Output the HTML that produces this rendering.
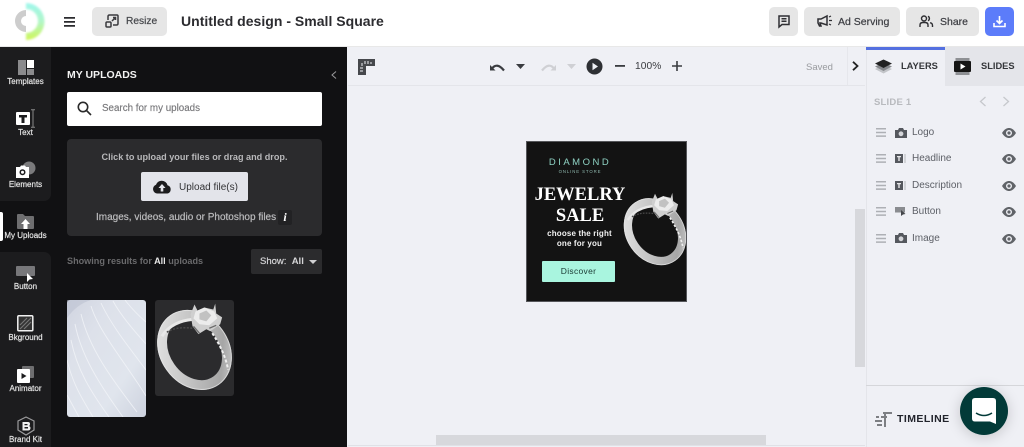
<!DOCTYPE html>
<html><head><meta charset="utf-8"><style>
html,body{margin:0;padding:0}
body{width:1024px;height:447px;position:relative;overflow:hidden;background:#fff;font-family:"Liberation Sans",sans-serif}
.a{position:absolute;white-space:nowrap}
.b{position:absolute;background:#e6e6e6;border-radius:5px}
.rl{position:absolute;left:0;width:51px;text-align:center;font-size:8px;color:#e4e4e4;line-height:10px;-webkit-text-stroke:.2px #e4e4e4}
.ly{position:absolute;left:912px;font-size:10px;color:#5c5f66;line-height:12px}
svg{position:absolute;overflow:visible}
</style></head><body>
<svg width="0" height="0" style="left:0;top:0"><defs>
<linearGradient id="rg" x1="0" y1="0" x2="1" y2="1"><stop offset="0" stop-color="#e6e6e6"/><stop offset=".45" stop-color="#c4c4c4"/><stop offset=".8" stop-color="#a6a6a6"/><stop offset="1" stop-color="#d4d4d4"/></linearGradient>
<linearGradient id="lg" x1="0" y1="0" x2="0" y2="1"><stop offset="0" stop-color="#8ff5ea"/><stop offset=".5" stop-color="#a5f5c0"/><stop offset="1" stop-color="#c8f53c"/></linearGradient>
<filter id="bl"><feGaussianBlur stdDeviation="1"/></filter>
<filter id="bs"><feGaussianBlur stdDeviation=".35"/></filter>
<symbol id="ring" viewBox="0 0 80 96"><g filter="url(#bs)">
<ellipse cx="40" cy="50" rx="30" ry="38" transform="rotate(-35 40 50)" fill="none" stroke="url(#rg)" stroke-width="10"/>
<ellipse cx="40" cy="50" rx="34.500" ry="42.500" transform="rotate(-35 40 50)" fill="none" stroke="#e8e8e8" stroke-width="1" opacity=".7"/>
<path d="M7 36C14 25 26 20 38 19" fill="none" stroke="#e8e8e8" stroke-width="3"/>
<path d="M12 32C20 27 30 27 38 28" fill="none" stroke="#4a4a4a" stroke-width="1.500" stroke-dasharray="2 1.500"/>
<path d="M58 33C66 45 72 58 74 70" fill="none" stroke="#f0f0f0" stroke-width="2" stroke-dasharray="3 2"/>
<path d="M40 4L43 10 50 7 59 9 61 3 62 13 68 17 66 24 56 31 52 29 44 34 38 26 36 14Z" fill="#cfcfcf"/>
<path d="M41 11L50 7 60 11 63 18 55 25 45 24 39 18Z" fill="#ececec"/>
<path d="M45 13L52 10 57 15 52 21 45 19Z" fill="#c2c2c2"/>
<path d="M39 26L45 33M55 28L62 25" stroke="#6a6a6a" stroke-width="1.300"/>
</g></symbol>
<symbol id="cam" viewBox="0 0 12 10"><path d="M0 2H3L4 0H8L9 2H12V10H0Z" fill="#55585e"/><circle cx="6" cy="5.800" r="2.400" fill="#d5d6da"/></symbol>
<symbol id="eye" viewBox="0 0 14 10"><path d="M0 5C2.500 1 5 0 7 0S11.500 1 14 5C11.500 9 9 10 7 10S2.500 9 0 5Z" fill="#606368"/><circle cx="7" cy="5" r="3" fill="#eff0f5"/><circle cx="7" cy="5" r="1.600" fill="#606368"/></symbol>
<symbol id="grip" viewBox="0 0 10 9"><path d="M0 0H10V1.500H0ZM0 3.700H10V5.200H0ZM0 7.400H10V8.900H0Z" fill="#aeb0b5"/></symbol>
<symbol id="tic" viewBox="0 0 12 9"><rect width="8" height="9" fill="#55585e"/><path d="M2 2H6V3.200H4.700V7H3.300V3.200H2Z" fill="#e8e8ea"/><path d="M10 0V9" stroke="#b5b7bb"/></symbol>
</defs></svg>

<!-- HEADER -->
<div class="a" style="left:0;top:46px;width:1024px;height:1px;background:#e8e8e8"></div>
<svg style="left:0;top:0" width="50" height="46">
<path d="M26 3A18.500 18.500 0 0 1 26 40V33A11.500 11.500 0 0 0 26 9Z" fill="url(#lg)" filter="url(#bl)" opacity=".85"/>
<path d="M26 10A11 11 0 0 0 26 32V26A5 5 0 0 1 26 16Z" fill="#cdcdcd"/>
</svg>
<svg style="left:64px;top:17px" width="12" height="10"><path d="M0 0H11V1.800H0ZM0 4H11V5.800H0ZM0 8H11V9.800H0Z" fill="#2b2b2f"/></svg>
<div class="b" style="left:92px;top:7px;width:75px;height:29px"></div>
<svg style="left:105px;top:14px" width="14" height="14" fill="none" stroke="#3a3a3e" stroke-width="1.500"><rect x="1" y="8" width="5" height="5" rx="1"/><path d="M3 6V2.500Q3 1 4.500 1H12Q13 1 13 2V9.500Q13 11 11.500 11H8M7 7L10.500 3.500M8 3.500H10.500V6"/></svg>
<div class="a" style="left:126px;top:15px;font-size:10.200px;color:#45474b;line-height:14px;-webkit-text-stroke:.2px #45474b">Resize</div>
<div class="a" style="left:181px;top:12px;font-size:14px;font-weight:bold;color:#2c2c30;line-height:19px;letter-spacing:.02px">Untitled design - Small Square</div>
<div class="b" style="left:769px;top:7px;width:29px;height:29px"></div>
<svg style="left:778px;top:15px" width="12" height="13" fill="none" stroke="#2f2f33" stroke-width="1.500"><path d="M1 1H11V9.500H4L1 12ZM3.500 3.800H8.500M3.500 6.300H8.500"/></svg>
<div class="b" style="left:804px;top:7px;width:96px;height:29px"></div>
<svg style="left:818px;top:16px" width="14" height="11"><path d="M0 3H3L9 0V9L3 7H2L3 10H1.500L0 7Z" fill="none" stroke="#2f2f33" stroke-width="1.500"/><path d="M11 1L13 0M11 4.500H14M11 8L13 9" stroke="#2f2f33" stroke-width="1.200"/></svg>
<div class="a" style="left:838px;top:14.500px;font-size:10.500px;color:#3c3d42;line-height:14px;-webkit-text-stroke:.2px #3c3d42">Ad Serving</div>
<div class="b" style="left:906px;top:7px;width:73px;height:29px"></div>
<svg style="left:919px;top:15px" width="14" height="13" fill="none" stroke="#2f2f33" stroke-width="1.400"><circle cx="5" cy="3.500" r="2.500"/><path d="M1 12V10Q1 7.500 4 7.500H6Q9 7.500 9 10V12M9 1.300A2.500 2.500 0 0 1 9 5.800M11 7.800Q13.500 8 13.500 10.500V12"/></svg>
<div class="a" style="left:940px;top:14.500px;font-size:10.500px;color:#3c3d42;line-height:14px;-webkit-text-stroke:.2px #3c3d42">Share</div>
<div class="b" style="left:985px;top:7px;width:29px;height:29px;background:#5c7cfa"></div>
<svg style="left:993px;top:16px" width="13" height="12" fill="none" stroke="#fff" stroke-width="1.600"><path d="M6.500 0V7M3.500 4.500L6.500 7.500 9.500 4.500M1 7V10.500H12V7"/></svg>

<!-- LEFT RAIL -->
<div class="a" style="left:0;top:47px;width:51px;height:400px;background:#111113"></div>
<div class="a" style="left:0;top:47px;width:51px;height:154px;background:#1c1c1e;border-radius:0 0 7px 0"></div>
<div class="a" style="left:0;top:252px;width:51px;height:195px;background:#1c1c1e;border-radius:0 7px 0 0"></div>
<svg style="left:18px;top:60px" width="16" height="15"><rect width="8" height="15" fill="#8a8a8c"/><rect x="9" width="7" height="8" fill="#fff"/><rect x="9" y="9" width="7" height="6" fill="#8a8a8c"/></svg>
<div class="rl" style="top:77px">Templates</div>
<svg style="left:16px;top:109px" width="20" height="20"><rect x="0" y="3" width="14" height="13" rx="1" fill="#fff"/><path d="M3 6H11V8.500H8.500V14H5.500V8.500H3Z" fill="#1c1c1e"/><path d="M17 1V18M15 .700H19M15 18.300H19" stroke="#888" stroke-width="1"/></svg>
<div class="rl" style="top:128px">Text</div>
<svg style="left:15px;top:161px" width="22" height="18"><circle cx="14" cy="7" r="6.500" fill="#7a7a7c"/><path d="M1 6H5L6 4.500H10L11 6H14V17H1Z" fill="#fff"/><circle cx="7.500" cy="11.300" r="3" fill="#1c1c1e"/><circle cx="7.500" cy="11.300" r="1.500" fill="#fff"/></svg>
<div class="rl" style="top:180px">Elements</div>
<div class="a" style="left:0;top:212px;width:3px;height:29px;background:#fff;border-radius:0 2px 2px 0"></div>
<svg style="left:17px;top:214px" width="17" height="15"><path d="M0 1Q0 0 1 0H6L8 2H16Q17 2 17 3V14Q17 15 16 15H1Q0 15 0 14Z" fill="#6e6e70"/><path d="M8.500 5L13 10H10.500V15H6.500V10H4Z" fill="#fff"/></svg>
<div class="rl" style="top:231px">My Uploads</div>
<svg style="left:16px;top:266px" width="20" height="16"><rect width="19" height="10" rx="1" fill="#77777a"/><path d="M11 7L11 16 13.500 13.500 17 13 Z" fill="#fff"/></svg>
<div class="rl" style="top:282px">Button</div>
<svg style="left:17px;top:315px" width="17" height="17"><rect x=".8" y=".8" width="15" height="15" rx="1" fill="#333" stroke="#f2f2f2" stroke-width="1.500"/><path d="M3 10L10 3M3 14L14 3M7 14L14 7" stroke="#777" stroke-width="1.200"/></svg>
<div class="rl" style="top:333px">Bkground</div>
<svg style="left:17px;top:366px" width="17" height="17"><rect x="5" y="0" width="12" height="12" rx="1" fill="#6e6e70"/><rect x="0" y="3" width="13" height="14" rx="1" fill="#fff"/><path d="M4.500 7L9.500 10 4.500 13Z" fill="#1c1c1e"/></svg>
<div class="rl" style="top:384px">Animator</div>
<svg style="left:17px;top:416px" width="18" height="20" fill="none"><path d="M9 1L17 5V14L9 19 1 14V5Z" stroke="#9a9a9c" stroke-width="1.200"/><path d="M5.500 6H11Q13 6 13 8 13 9.500 12 10 13.500 10.500 13.500 12 13.500 14.500 11 14.500H5.500Z" fill="#f0f0f0"/><path d="M7.500 8H10.500V9.300H7.500ZM7.500 11H11V12.500H7.500Z" fill="#1c1c1e"/></svg>
<div class="rl" style="top:435px">Brand Kit</div>

<!-- PANEL -->
<div class="a" style="left:51px;top:47px;width:296px;height:400px;background:#111113"></div>
<div class="a" style="left:67px;top:67.500px;font-size:10.500px;font-weight:bold;color:#f2f2f2;line-height:14px">MY UPLOADS</div>
<svg style="left:331px;top:71px" width="6" height="8" fill="none" stroke="#9a9a9c" stroke-width="1"><path d="M5 .5L1 4 5 7.500"/></svg>
<div class="a" style="left:67px;top:92px;width:255px;height:34px;background:#fff;border-radius:2px"></div>
<svg style="left:77px;top:101px" width="15" height="15" fill="none" stroke="#2a2a2a" stroke-width="1.600"><circle cx="6" cy="6" r="4.700"/><path d="M9.500 9.500L14 14"/></svg>
<div class="a" style="left:102px;top:102px;font-size:9.800px;color:#77777a;line-height:13px;-webkit-text-stroke:.15px #77777a">Search for my uploads</div>
<div class="a" style="left:67px;top:139px;width:255px;height:97px;background:#2b2b2d;border-radius:4px"></div>
<div class="a" style="left:67px;top:151px;width:255px;text-align:center;font-size:9.100px;font-weight:bold;color:#b8b8ba;line-height:13px">Click to upload your files or drag and drop.</div>
<div class="a" style="left:141px;top:172px;width:107px;height:29px;background:#e3e4ea;border-radius:2px"></div>
<svg style="left:152px;top:180px" width="20" height="14"><path d="M5 13.500A4.500 4.500 0 0 1 4 4.800 6 6 0 0 1 15.500 5.200 4.300 4.300 0 0 1 15.500 13.500Z" fill="#1c1c1e"/><path d="M10 4L13.500 8H11.300V11.500H8.700V8H6.500Z" fill="#e3e4ea"/></svg>
<div class="a" style="left:179px;top:181px;font-size:10px;color:#333336;line-height:13px">Upload file(s)</div>
<div class="a" style="left:96px;top:211px;font-size:10px;color:#bcbcbe;line-height:13px;-webkit-text-stroke:.2px #bcbcbe">Images, videos, audio or Photoshop files</div>
<div class="a" style="left:278px;top:210px;width:14px;height:15px;background:#222224;border-radius:2px;color:#fff;font:italic bold 12px/15px 'Liberation Serif',serif;text-align:center">i</div>
<div class="a" style="left:67px;top:255px;font-size:9.100px;font-weight:bold;color:#6a6a6c;line-height:13px">Showing results for <span style="color:#e8e8e8">All</span> uploads</div>
<div class="a" style="left:251px;top:249px;width:71px;height:25px;background:#2b2b2d;border-radius:2px"></div>
<div class="a" style="left:260px;top:254.500px;font-size:9.500px;color:#d6d6d8;line-height:13px;-webkit-text-stroke:.2px #d6d6d8">Show:&nbsp; <span style="font-weight:bold;-webkit-text-stroke:0">All</span></div>
<svg style="left:309px;top:260px" width="8" height="4"><path d="M0 0H8L4 4Z" fill="#d0d0d2"/></svg>

<!-- thumb 1 -->
<svg style="left:67px;top:300px;overflow:hidden" width="79" height="117" viewBox="0 0 79 117">
<defs><linearGradient id="tg" x1="0" y1="0" x2="1" y2="1"><stop offset="0" stop-color="#d0d4e0"/><stop offset=".3" stop-color="#dde1ea"/><stop offset=".7" stop-color="#e0e5ed"/><stop offset="1" stop-color="#cdd2de"/></linearGradient></defs>
<rect width="79" height="117" rx="3" fill="url(#tg)"/>
<path d="M0 18Q10 4 24 0H0Z" fill="#b8bdcd" opacity=".5"/>
<g fill="none" stroke="#f2f4f8" stroke-width=".9" opacity=".85">
<path d="M0 60C6 85 16 100 26 117"/><path d="M4 40C10 70 24 92 42 117"/><path d="M8 24C14 55 32 84 56 117"/><path d="M14 14C22 48 44 78 70 112"/><path d="M24 6C32 32 58 62 79 96"/><path d="M34 3C44 25 64 50 79 70"/><path d="M46 1C54 16 68 32 79 44"/><path d="M58 0C64 8 72 16 79 22"/><path d="M0 95L12 117"/>
</g>
</svg>
<!-- thumb 2 -->
<div class="a" style="left:155px;top:300px;width:79px;height:96px;background:#2b2b2d;border-radius:3px"></div>
<svg style="left:155px;top:300px" width="79" height="96"><use href="#ring" width="79" height="96"/></svg>

<!-- CANVAS -->
<div class="a" style="left:347px;top:47px;width:519px;height:400px;background:#eff0f5"></div>
<div class="a" style="left:348px;top:85px;width:517px;height:1px;background:#e4e5ea"></div>
<div class="a" style="left:847px;top:47px;width:1px;height:38px;background:#e6e7ec"></div>
<svg style="left:358px;top:59px" width="17" height="16"><path d="M0 0H17V7H8V16H0Z" fill="#46484c"/><path d="M4 4V7M7 2V5M10 2V5M13 3V5M2 9H5M2 12H5" stroke="#eff0f5" stroke-width="1"/></svg>
<svg style="left:489px;top:61px" width="16" height="11" fill="none"><path d="M1 4V9.500H6.500Z" fill="#3a3c40"/><path d="M3 7.500Q8 1 15 9.500" stroke="#3a3c40" stroke-width="2.200"/></svg>
<svg style="left:516px;top:64px" width="9" height="5"><path d="M0 0H9L4.500 5Z" fill="#3a3c40"/></svg>
<svg style="left:541px;top:61px" width="16" height="11" fill="none"><path d="M15 4V9.500H9.500Z" fill="#cfd0d4"/><path d="M13 7.500Q8 1 1 9.500" stroke="#cfd0d4" stroke-width="2.200"/></svg>
<svg style="left:567px;top:64px" width="9" height="5"><path d="M0 0H9L4.500 5Z" fill="#cfd0d4"/></svg>
<svg style="left:586px;top:58px" width="17" height="17"><circle cx="8.500" cy="8.500" r="8" fill="#2e3034"/><path d="M6.500 4.800L12 8.500 6.500 12.200Z" fill="#eff0f5"/></svg>
<svg style="left:615px;top:65px" width="10" height="2"><rect width="10" height="1.800" fill="#3a3c40"/></svg>
<div class="a" style="left:635px;top:60px;font-size:10.200px;color:#3a3c40;line-height:14px;letter-spacing:.1px">100%</div>
<svg style="left:672px;top:61px" width="10" height="10"><path d="M0 4.200H10V5.800H0ZM4.200 0H5.800V10H4.200Z" fill="#3a3c40"/></svg>
<div class="a" style="left:806px;top:60.500px;font-size:9.500px;color:#999b9f;line-height:13px">Saved</div>
<svg style="left:852px;top:61px" width="7" height="10" fill="none" stroke="#222" stroke-width="1.800"><path d="M1 .8L5.500 5 1 9.200"/></svg>

<!-- AD -->
<div class="a" style="left:527px;top:142px;width:159px;height:159px;background:#131313;overflow:hidden;outline:1px solid #55565a">
<div class="a" style="left:0;width:106px;top:15px;text-align:center;font-size:9.500px;color:#8fd3c4;letter-spacing:2.500px;line-height:12px">DIAMOND</div>
<div class="a" style="left:0;width:106px;top:26px;text-align:center;font-size:4.300px;color:#8fb8ae;letter-spacing:.9px;line-height:8px">ONLINE STORE</div>
<div class="a" style="left:0;width:106px;top:43px;text-align:center;font:bold 18.500px/21px 'Liberation Serif',serif;color:#fff">JEWELRY<br>SALE</div>
<div class="a" style="left:0;width:105px;top:87px;text-align:center;font-size:8px;font-weight:bold;color:#f2f2f2;line-height:10px;letter-spacing:.15px">choose the right<br>one for you</div>
<div class="a" style="left:15px;top:119px;width:73px;height:21px;background:#a9f5df;border-radius:1px;text-align:center;font-size:8.500px;color:#1b3a34;line-height:21px;letter-spacing:.3px">Discover</div>
<svg style="left:95px;top:48px" width="66" height="80"><use href="#ring" width="66" height="80"/></svg>
</div>

<!-- scrollbars -->
<div class="a" style="left:855px;top:209px;width:10px;height:158px;background:#d7d8dc"></div>
<div class="a" style="left:436px;top:435px;width:330px;height:10px;background:#d7d8dc"></div>
<div class="a" style="left:348px;top:445px;width:517px;height:1px;background:#e0e1e6"></div>

<!-- RIGHT -->
<div class="a" style="left:866px;top:47px;width:158px;height:400px;background:#eff0f5;border-left:1px solid #e4e5ea;box-sizing:border-box"></div>
<div class="a" style="left:866px;top:47px;width:79px;height:3px;background:#5470e0"></div>
<div class="a" style="left:945px;top:47px;width:79px;height:39px;background:#e4e5ea"></div>
<svg style="left:875px;top:59px" width="17" height="15"><path d="M0 10L8.500 6 17 10 8.500 14.500Z" fill="#c2c4c8"/><path d="M0 7.500L8.500 3.500 17 7.500 8.500 12Z" fill="#85878b"/><path d="M0 4.500L8.500 .5 17 4.500 8.500 9Z" fill="#222"/></svg>
<div class="a" style="left:901px;top:60px;font-size:9.300px;font-weight:bold;color:#34363a;line-height:13px">LAYERS</div>
<svg style="left:954px;top:58px" width="17" height="17"><rect x="1.500" y="0" width="14" height="17" fill="#8e9094"/><rect x="0" y="3" width="17" height="11" rx="1" fill="#151515"/><path d="M6.500 5.500L11.500 8.500 6.500 11.500Z" fill="#fff"/></svg>
<div class="a" style="left:981px;top:60px;font-size:9.300px;font-weight:bold;color:#34363a;line-height:13px">SLIDES</div>
<div class="a" style="left:874px;top:96px;font-size:9.500px;font-weight:bold;color:#b8babe;line-height:13px;letter-spacing:.2px">SLIDE 1</div>
<svg style="left:979px;top:96px" width="8" height="11" fill="none" stroke="#c6c8cc" stroke-width="1.300"><path d="M6.500 1L1.500 5.500 6.500 10"/></svg>
<svg style="left:1002px;top:96px" width="8" height="11" fill="none" stroke="#c6c8cc" stroke-width="1.300"><path d="M1.500 1L6.500 5.500 1.500 10"/></svg>

<svg style="left:876px;top:128px" width="10" height="9"><use href="#grip"/></svg>
<svg style="left:895px;top:128px" width="12" height="10"><use href="#cam"/></svg>
<div class="ly" style="top:127px">Logo</div>
<svg style="left:1002px;top:128px" width="14" height="10"><use href="#eye"/></svg>

<svg style="left:876px;top:154px" width="10" height="9"><use href="#grip"/></svg>
<svg style="left:895px;top:154px" width="12" height="9"><use href="#tic"/></svg>
<div class="ly" style="top:153px">Headline</div>
<svg style="left:1002px;top:154px" width="14" height="10"><use href="#eye"/></svg>

<svg style="left:876px;top:181px" width="10" height="9"><use href="#grip"/></svg>
<svg style="left:895px;top:181px" width="12" height="9"><use href="#tic"/></svg>
<div class="ly" style="top:180px">Description</div>
<svg style="left:1002px;top:181px" width="14" height="10"><use href="#eye"/></svg>

<svg style="left:876px;top:207px" width="10" height="9"><use href="#grip"/></svg>
<svg style="left:895px;top:207px" width="12" height="9"><rect width="10" height="5.500" fill="#8a8c90"/><path d="M6 3V9L8 7.500 10.500 7Z" fill="#44464a"/></svg>
<div class="ly" style="top:206px">Button</div>
<svg style="left:1002px;top:207px" width="14" height="10"><use href="#eye"/></svg>

<svg style="left:876px;top:234px" width="10" height="9"><use href="#grip"/></svg>
<svg style="left:895px;top:233px" width="12" height="10"><use href="#cam"/></svg>
<div class="ly" style="top:233px">Image</div>
<svg style="left:1002px;top:234px" width="14" height="10"><use href="#eye"/></svg>

<div class="a" style="left:866px;top:385px;width:158px;height:1px;background:#d5d6da"></div>
<svg style="left:875px;top:411px" width="17" height="16"><path d="M8 1H17V3H8ZM6 5H12V7H6ZM0 9H7V11H0ZM2 13H7V15H2ZM1 5H4V7H1ZM9 3H11V16H9Z" fill="#7d7f83"/></svg>
<div class="a" style="left:897px;top:412px;font-size:10.500px;font-weight:bold;color:#22242c;line-height:14px;letter-spacing:.45px">TIMELINE</div>
<div class="a" style="left:960px;top:387px;width:48px;height:48px;border-radius:50%;background:#023a38;box-shadow:0 2px 14px rgba(0,0,0,.18)"></div>
<svg style="left:972px;top:398px" width="24" height="27"><path d="M3 0H21Q24 0 24 3V26L18 23.500H3Q0 23.500 0 20.500V3Q0 0 3 0Z" fill="#fff"/><path d="M4 15Q12 20 20 15" fill="none" stroke="#023a38" stroke-width="1.600"/></svg>
</body></html>
